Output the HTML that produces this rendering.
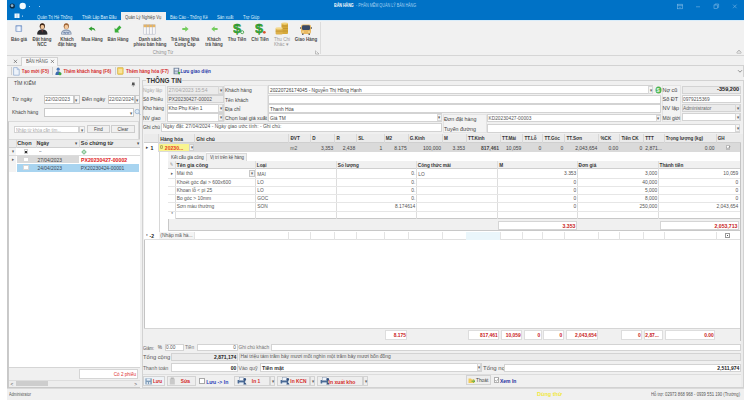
<!DOCTYPE html>
<html><head><meta charset="utf-8"><style>
html,body{margin:0;padding:0;}
body{width:750px;height:400px;position:relative;overflow:hidden;background:#fff;font-family:"Liberation Sans",sans-serif;}
body>div,body>svg{position:absolute;box-sizing:border-box;}
.t{white-space:nowrap;}
</style></head><body>
<div style="left:7px;top:0px;width:737px;height:400px;background:#F0F0F0"></div><div style="left:7px;top:0px;width:737px;height:20px;background:#0072C6"></div><div style="left:7px;top:19.6px;width:737px;height:0.9px;background:#D8ECFA"></div><svg style="left:9px;top:3px" width="8" height="7"><circle cx="3.3" cy="3" r="2.6" fill="#0A2A44"/><circle cx="3.1" cy="2.7" r="1.4" fill="#8FB3CC"/></svg><svg style="left:19px;top:2px" width="8" height="8"><circle cx="3.7" cy="4" r="3.2" fill="#F4FBFF"/></svg><div style="left:28.5px;top:5.5px;width:1.2px;height:1.2px;background:#9FD0F5"></div><div style="left:38.5px;top:5.5px;width:1.2px;height:1.2px;background:#9FD0F5"></div><div class="t" style="left:334px;top:4.39px;font-size:4.5px;transform:scaleX(0.812);transform-origin:0 0;line-height:4.5px;color:#FFFFFF;font-weight:bold;">BÁN HÀNG</div><div class="t" style="left:355.5px;top:4.39px;font-size:4.5px;transform:scaleX(0.827);transform-origin:0 0;line-height:4.5px;color:#A9D3F2;">- PHẦN MỀM QUẢN LÝ BÁN HÀNG</div><svg style="left:672px;top:1px" width="70" height="11" stroke="#86BDE8" stroke-width="0.55" fill="none"><rect x="5.3" y="3.2" width="5.4" height="4.6"/><line x1="5.3" y1="4.4" x2="10.7" y2="4.4"/><path d="M7,5.6 L8,6.6 L9,5.6" /><line x1="24" y1="5.8" x2="28" y2="5.8"/><rect x="42" y="4" width="3.6" height="3.4"/><polyline points="43,4 43,3 46.6,3 46.6,6.4 45.6,6.4"/><line x1="61" y1="3.6" x2="64.6" y2="7.2"/><line x1="64.6" y1="3.6" x2="61" y2="7.2"/></svg><svg style="left:14px;top:13px" width="10" height="7"><rect x="0.5" y="0.5" width="5" height="4.5" fill="#F2F8FC"/><line x1="3" y1="0.5" x2="3" y2="5" stroke="#7FB3DA" stroke-width="0.6"/><rect x="8" y="2.6" width="1" height="1" fill="#CFE6F7"/></svg><div class="t" style="left:37px;top:14.6px;font-size:4.5px;transform:scaleX(0.922);transform-origin:0 0;line-height:5.4px;color:#DDEEFB;">Quản Trị Hệ Thống</div><div class="t" style="left:82px;top:14.6px;font-size:4.5px;transform:scaleX(0.922);transform-origin:0 0;line-height:5.4px;color:#DDEEFB;">Thiết Lập Ban Đầu</div><div style="left:120.5px;top:12px;width:45.8px;height:8.5px;background:#F0F0F0"></div><div class="t" style="left:125px;top:14.8px;font-size:4.5px;transform:scaleX(0.922);transform-origin:0 0;line-height:5.4px;color:#444;">Quản Lý Nghiệp Vụ</div><div class="t" style="left:170px;top:14.6px;font-size:4.5px;transform:scaleX(0.922);transform-origin:0 0;line-height:5.4px;color:#DDEEFB;">Báo Cáo - Thống Kê</div><div class="t" style="left:216.5px;top:14.6px;font-size:4.5px;transform:scaleX(0.922);transform-origin:0 0;line-height:5.4px;color:#DDEEFB;">Sản xuất</div><div class="t" style="left:243px;top:14.6px;font-size:4.5px;transform:scaleX(0.922);transform-origin:0 0;line-height:5.4px;color:#DDEEFB;">Trợ Giúp</div><div style="left:7px;top:20.5px;width:737px;height:34.5px;background:#F1F1F1"></div><div style="left:7px;top:55px;width:737px;height:0.8px;background:#D6D6D6"></div><div style="left:319.5px;top:22px;width:0.7px;height:32px;background:#DCDCDC"></div><svg style="left:15px;top:25px" width="8" height="7"><rect x="0.5" y="0.3" width="6.6" height="6.4" rx="0.6" fill="#7A98C8"/><rect x="1.2" y="1.5" width="5.2" height="4.6" fill="#C9D8EE"/><rect x="2.4" y="1.5" width="2.8" height="4.6" fill="#F2F6FC"/></svg><svg style="left:36px;top:22px" width="13" height="13"><path d="M1.2,12.4 C1,9.2 3,7.6 6.3,7.6 C9.6,7.6 11.6,9.2 11.4,12.4 Q6.3,13 1.2,12.4 Z" fill="#2A2A2E"/><path d="M5.3,7.8 L6.3,11 L7.3,7.8 Z" fill="#6A3A3A"/><ellipse cx="6.3" cy="4.2" rx="2.6" ry="3" fill="#3E2718"/><ellipse cx="6.4" cy="4.9" rx="1.9" ry="2.2" fill="#F0C49A"/><path d="M4,3.6 C4.4,2.2 5.2,1.8 6.4,1.8 C7.6,1.8 8.4,2.4 8.7,3.6 C7.8,2.9 6.6,2.8 5.6,3 Z" fill="#3E2718"/></svg><svg style="left:60px;top:22px" width="13" height="13"><path d="M1,12.4 C0.8,9.2 3,7.6 6.3,7.6 C9.6,7.6 11.8,9.2 11.6,12.4 Q6.3,13 1,12.4 Z" fill="#8C9CB4"/><path d="M2.2,12 C2,10 3.5,8.8 6.3,8.8 C9.1,8.8 10.6,10 10.4,12 Z" fill="#D5DEEA"/><path d="M3.4,9.8 L4.1,11.6 L4.8,9.8 L5.5,11.6 L6.2,9.8 M6.6,9.8 L7.3,11.6 L8,9.8 L8.7,11.6 L9.4,9.8" stroke="#3F5A8A" stroke-width="0.5" fill="none"/><ellipse cx="6.3" cy="4.2" rx="2.6" ry="3" fill="#A0673A"/><ellipse cx="6.4" cy="4.9" rx="1.9" ry="2.2" fill="#F3C99E"/><path d="M4,3.6 C4.4,2.2 5.2,1.8 6.4,1.8 C7.6,1.8 8.4,2.4 8.7,3.6 C7.8,2.9 6.6,2.8 5.6,3 Z" fill="#A0673A"/></svg><svg style="left:88px;top:26px" width="8" height="6"><path d="M7.4,5.2 C7.2,2.6 5.6,1.6 3.8,1.8 L3.8,0.4 L0.6,2.8 L3.8,5 L3.8,3.6 C5.2,3.4 6.4,4 7.4,5.2 Z" fill="#2F9E2F"/></svg><svg style="left:113.5px;top:24.5px" width="8" height="8"><path d="M0.6,0.8 L5.2,0.6 L3.8,2 L7.4,5.4 L5.4,7.4 L1.9,4 L0.6,5.4 Z" fill="#3BAF3B" transform="rotate(270 4 4)"/></svg><svg style="left:143px;top:23.5px" width="13" height="11"><rect x="0.4" y="0.4" width="12" height="10" rx="0.8" fill="#F7F7F7" stroke="#B9BFCC" stroke-width="0.6"/><rect x="0.6" y="0.6" width="11.6" height="2.6" fill="#E8B460"/><line x1="3.4" y1="0.6" x2="3.4" y2="10.2" stroke="#A9AFBD" stroke-width="0.6"/><line x1="6.4" y1="0.6" x2="6.4" y2="10.2" stroke="#A9AFBD" stroke-width="0.6"/><line x1="9.4" y1="0.6" x2="9.4" y2="10.2" stroke="#A9AFBD" stroke-width="0.6"/></svg><svg style="left:182px;top:25.5px" width="7" height="6"><path d="M0.3,2 L3.3,2 L3.3,0.3 L6.6,3 L3.3,5.7 L3.3,4 L0.3,4 Z" fill="#74CC5E"/></svg><svg style="left:210.5px;top:25.5px" width="7" height="6"><path d="M6.6,2 L3.6,2 L3.6,0.3 L0.3,3 L3.6,5.7 L3.6,4 L6.6,4 Z" fill="#74CC5E"/></svg><svg style="left:233px;top:22px" width="12" height="13"><text x="0" y="10.8" font-family="Liberation Sans" font-weight="bold" font-size="13.5" fill="#36B036" stroke="#1C7A1C" stroke-width="0.35" transform="scale(1.08,1)">$</text><circle cx="9.2" cy="10.2" r="1.5" fill="none" stroke="#3A9E3A" stroke-width="0.8"/></svg><svg style="left:255px;top:22px" width="12" height="13"><text x="0" y="10.8" font-family="Liberation Sans" font-weight="bold" font-size="13.5" fill="#36B036" stroke="#1C7A1C" stroke-width="0.35" transform="scale(1.08,1)">$</text><circle cx="9.3" cy="10.3" r="1.4" fill="#D9542B"/></svg><svg style="left:275px;top:22px" width="14" height="13"><rect x="6.5" y="1" width="6.5" height="11" rx="1" fill="#D6A93A"/><ellipse cx="9.75" cy="1.6" rx="3.25" ry="1.1" fill="#F2D27A"/><line x1="6.5" y1="4" x2="13" y2="4" stroke="#A87B1C" stroke-width="0.4"/><line x1="6.5" y1="6.5" x2="13" y2="6.5" stroke="#A87B1C" stroke-width="0.4"/><line x1="6.5" y1="9" x2="13" y2="9" stroke="#A87B1C" stroke-width="0.4"/><rect x="0.6" y="6" width="7" height="6.4" rx="1" fill="#DDB04A"/><ellipse cx="4.1" cy="6.4" rx="3.5" ry="1.1" fill="#F4D88A"/><line x1="0.6" y1="9.2" x2="7.6" y2="9.2" stroke="#A87B1C" stroke-width="0.4"/></svg><svg style="left:299.5px;top:23.5px" width="12" height="11"><rect x="1" y="0.5" width="10" height="9.5" rx="2" fill="#E9B962"/><rect x="2" y="1.3" width="8" height="4.6" rx="1.2" fill="#3A4A66"/><rect x="0.2" y="3" width="1" height="2" fill="#666"/><rect x="10.8" y="3" width="1" height="2" fill="#666"/><circle cx="3" cy="8" r="0.7" fill="#FFF3C0"/><circle cx="9" cy="8" r="0.7" fill="#FFF3C0"/><rect x="2" y="9.6" width="1.5" height="1.2" fill="#444"/><rect x="8.5" y="9.6" width="1.5" height="1.2" fill="#444"/></svg><div class="t" style="left:-1.1px;top:37.41px;width:40px;text-align:center;font-size:4.5px;transform:scaleX(0.989);transform-origin:50% 0;line-height:5.79px;color:#4A4A4A;font-weight:bold;">Báo giá</div><div class="t" style="left:22.3px;top:37.41px;width:40px;text-align:center;font-size:4.5px;transform:scaleX(0.989);transform-origin:50% 0;line-height:5.79px;color:#4A4A4A;font-weight:bold;">Đặt hàng</div><div class="t" style="left:22.3px;top:42.01px;width:40px;text-align:center;font-size:4.5px;transform:scaleX(0.989);transform-origin:50% 0;line-height:5.79px;color:#4A4A4A;font-weight:bold;">NCC</div><div class="t" style="left:46.5px;top:37.41px;width:40px;text-align:center;font-size:4.5px;transform:scaleX(0.989);transform-origin:50% 0;line-height:5.79px;color:#4A4A4A;font-weight:bold;">Khách</div><div class="t" style="left:46.5px;top:42.01px;width:40px;text-align:center;font-size:4.5px;transform:scaleX(0.989);transform-origin:50% 0;line-height:5.79px;color:#4A4A4A;font-weight:bold;">đặt hàng</div><div class="t" style="left:71.8px;top:37.41px;width:40px;text-align:center;font-size:4.5px;transform:scaleX(0.989);transform-origin:50% 0;line-height:5.79px;color:#4A4A4A;font-weight:bold;">Mua Hàng</div><div class="t" style="left:97.6px;top:37.41px;width:40px;text-align:center;font-size:4.5px;transform:scaleX(0.989);transform-origin:50% 0;line-height:5.79px;color:#4A4A4A;font-weight:bold;">Bán Hàng</div><div class="t" style="left:124.5px;top:37.41px;width:50px;text-align:center;font-size:4.5px;transform:scaleX(0.989);transform-origin:50% 0;line-height:5.79px;color:#4A4A4A;font-weight:bold;">Danh sách</div><div class="t" style="left:124.5px;top:42.01px;width:50px;text-align:center;font-size:4.5px;transform:scaleX(0.989);transform-origin:50% 0;line-height:5.79px;color:#4A4A4A;font-weight:bold;">phiếu bán hàng</div><div class="t" style="left:160.3px;top:37.41px;width:50px;text-align:center;font-size:4.5px;transform:scaleX(0.989);transform-origin:50% 0;line-height:5.79px;color:#4A4A4A;font-weight:bold;">Trả Hàng Nhà</div><div class="t" style="left:160.3px;top:42.01px;width:50px;text-align:center;font-size:4.5px;transform:scaleX(0.989);transform-origin:50% 0;line-height:5.79px;color:#4A4A4A;font-weight:bold;">Cung Cấp</div><div class="t" style="left:194.0px;top:37.41px;width:40px;text-align:center;font-size:4.5px;transform:scaleX(0.989);transform-origin:50% 0;line-height:5.79px;color:#4A4A4A;font-weight:bold;">Khách</div><div class="t" style="left:194.0px;top:42.01px;width:40px;text-align:center;font-size:4.5px;transform:scaleX(0.989);transform-origin:50% 0;line-height:5.79px;color:#4A4A4A;font-weight:bold;">trả hàng</div><div class="t" style="left:217.3px;top:37.41px;width:40px;text-align:center;font-size:4.5px;transform:scaleX(0.989);transform-origin:50% 0;line-height:5.79px;color:#4A4A4A;font-weight:bold;">Thu Tiền</div><div class="t" style="left:239.8px;top:37.41px;width:40px;text-align:center;font-size:4.5px;transform:scaleX(0.989);transform-origin:50% 0;line-height:5.79px;color:#4A4A4A;font-weight:bold;">Chi Tiền</div><div class="t" style="left:274px;top:37.31px;font-size:4.6px;line-height:5.98px;color:#9A9A9A;">Thu Chi</div><div class="t" style="left:274px;top:41.91px;font-size:4.6px;line-height:5.98px;color:#9A9A9A;">Khác ▾</div><div class="t" style="left:286.0px;top:37.41px;width:40px;text-align:center;font-size:4.5px;transform:scaleX(0.989);transform-origin:50% 0;line-height:5.79px;color:#4A4A4A;font-weight:bold;">Giao Hàng</div><div class="t" style="left:142.5px;top:50.14px;width:40px;text-align:center;font-size:4.5px;transform:scaleX(0.978);transform-origin:50% 0;line-height:5.72px;color:#8A8A8A;">Chứng Từ</div><svg style="left:315px;top:49.5px" width="5" height="5" stroke="#8A8A8A" stroke-width="0.5" fill="none"><polyline points="0.5,0.5 0.5,4 4,4"/><line x1="1.5" y1="1.5" x2="4" y2="4"/></svg><svg style="left:736px;top:49px" width="6" height="5"><path d="M0.8,3.6 L3,1.2 L5.2,3.6" stroke="#8A8A8A" stroke-width="0.7" fill="none"/><line x1="0.8" y1="4.2" x2="5.2" y2="4.2" stroke="#8A8A8A" stroke-width="0.5"/></svg><div style="left:7px;top:65px;width:737px;height:0.6px;background:#D2D2D2"></div><div style="left:21.4px;top:57.4px;width:36.4px;height:8.2px;background:#F7F7F7;border:0.6px solid #D2D2D2;border-bottom:none"></div><svg style="left:12.5px;top:59px" width="5" height="5" stroke="#555" stroke-width="0.6"><line x1="0.8" y1="0.8" x2="4" y2="4"/><line x1="4" y1="0.8" x2="0.8" y2="4"/></svg><div class="t" style="left:26px;top:58.67px;font-size:4.5px;transform:scaleX(0.933);transform-origin:0 0;line-height:5.46px;color:#555;">BÁN HÀNG</div><svg style="left:50px;top:59px" width="5" height="5" stroke="#555" stroke-width="0.6"><line x1="0.8" y1="0.8" x2="4" y2="4"/><line x1="4" y1="0.8" x2="0.8" y2="4"/></svg><div style="left:11px;top:67px;width:0.6px;height:8px;background:#CFCFCF"></div><div style="left:52px;top:67px;width:0.6px;height:8px;background:#CFCFCF"></div><div style="left:114.5px;top:67px;width:0.6px;height:8px;background:#CFCFCF"></div><svg style="left:13px;top:66.5px" width="7" height="9"><path d="M0.6,0.6 L4.2,0.6 L6.2,2.6 L6.2,8.2 L0.6,8.2 Z" fill="#EEF3FA" stroke="#7D9CC9" stroke-width="0.6"/><path d="M4.2,0.6 L4.2,2.6 L6.2,2.6" fill="none" stroke="#7D9CC9" stroke-width="0.5"/></svg><div class="t" style="left:21.8px;top:69.28px;font-size:4.5px;line-height:5.85px;color:#D42B2B;font-weight:bold;">Tạo mới (F5)</div><svg style="left:55px;top:66.5px" width="7" height="9"><circle cx="3.2" cy="2.2" r="1.6" fill="#4A78B8"/><path d="M0.4,8 C0.4,5.4 1.6,4.2 3.2,4.2 C4.8,4.2 6,5.4 6,8 Z" fill="#3C6AAE"/><circle cx="5" cy="6.8" r="1.5" fill="#3EAA3E"/></svg><div class="t" style="left:63.4px;top:69.28px;font-size:4.5px;line-height:5.85px;color:#D42B2B;font-weight:bold;">Thêm khách hàng (F6)</div><svg style="left:117px;top:67px" width="7" height="8"><rect x="0.4" y="0.4" width="5.8" height="7" rx="0.8" fill="#F1CF5A" stroke="#C9A23A" stroke-width="0.5"/><rect x="1.4" y="2" width="3.8" height="4.2" fill="#F8E39A"/></svg><div class="t" style="left:126px;top:69.28px;font-size:4.5px;line-height:5.85px;color:#D42B2B;font-weight:bold;">Thêm hàng hóa (F7)</div><svg style="left:172.5px;top:66.5px" width="8" height="9"><rect x="0.6" y="0.8" width="5.6" height="6.4" fill="#6A7C96"/><rect x="1.6" y="1.6" width="3.6" height="2" fill="#E8EEF6"/><rect x="1.6" y="4.4" width="3.6" height="2.2" fill="#C8D2E0"/><path d="M4.6,5 L7.6,5 L6.1,8 Z" fill="#3FAA3F"/></svg><div class="t" style="left:180.4px;top:69.21px;font-size:4.6px;line-height:5.98px;color:#2536A8;font-weight:bold;">Lưu giao diện</div><svg style="left:737px;top:69px" width="6" height="5"><path d="M1,1.2 L3,3.2 L5,1.2" stroke="#666" stroke-width="0.7" fill="none"/></svg><div style="left:743px;top:65px;width:1px;height:12px;background:#D0D0D0"></div><div style="left:7px;top:77px;width:133.3px;height:311px;background:#F0F0F0;border:0.8px solid #C8C8C8"></div><div class="t" style="left:14px;top:81.41px;font-size:4.9px;line-height:6.37px;color:#444;">TÌM KIẾM</div><svg style="left:131px;top:82px" width="5" height="5"><path d="M1,0.5 L3.6,0.5 L3.6,2.6 L4.3,3.2 L0.3,3.2 L1,2.6 Z" fill="#555"/><line x1="2.3" y1="3.2" x2="2.3" y2="4.8" stroke="#555" stroke-width="0.5"/></svg><div class="t" style="left:12px;top:96.29px;font-size:5.4px;line-height:7.02px;color:#444;">Từ ngày</div><div style="left:43.5px;top:95px;width:30.0px;height:9px;background:#fff;border:0.6px solid #C9C9C9"></div><div class="t" style="left:45.3px;top:97.08px;font-size:4.95px;line-height:6.44px;color:#555;">22/02/2023</div><div style="left:73.5px;top:95px;width:6.0px;height:9px;background:#F4F4F4;border:0.6px solid #C9C9C9"></div><div class="t" style="left:73.4px;top:98.0px;width:6px;text-align:center;font-size:4.5px;transform:scaleX(0.889);transform-origin:50% 0;line-height:5.2px;color:#555;">▾</div><div class="t" style="left:82px;top:96.29px;font-size:5.4px;line-height:7.02px;color:#444;">Đến ngày</div><div style="left:107.5px;top:95px;width:27.5px;height:9px;background:#fff;border:0.6px solid #C9C9C9"></div><div class="t" style="left:109px;top:97.08px;font-size:4.95px;line-height:6.44px;color:#555;">22/02/2024</div><div style="left:135px;top:95px;width:5px;height:9px;background:#F4F4F4;border:0.6px solid #C9C9C9"></div><div class="t" style="left:134.0px;top:98.0px;width:6px;text-align:center;font-size:4.5px;transform:scaleX(0.889);transform-origin:50% 0;line-height:5.2px;color:#555;">▾</div><div class="t" style="left:12px;top:109.81px;font-size:4.9px;line-height:6.37px;color:#444;">Khách hàng</div><div style="left:43.5px;top:108px;width:90.0px;height:8.5px;background:#fff;border:0.6px solid #C9C9C9"></div><div class="t" style="left:127.5px;top:110.7px;width:6px;text-align:center;font-size:4.5px;transform:scaleX(0.889);transform-origin:50% 0;line-height:5.2px;color:#555;">▾</div><svg style="left:133.5px;top:108px" width="7" height="8"><circle cx="3.2" cy="3.5" r="2.2" fill="#DDEBF7" stroke="#7F9FC4" stroke-width="0.6"/><line x1="4.8" y1="5.1" x2="6.4" y2="6.8" stroke="#7F9FC4" stroke-width="0.7"/></svg><div style="left:8.3px;top:120.5px;width:131.2px;height:266.5px;background:#F3F3F3;border-top:0.6px solid #DADADA;border-left:0.8px solid #CACACA;border-right:0.6px solid #DADADA"></div><div style="left:14.3px;top:125.8px;width:64.9px;height:7.7px;background:#fff;border:0.6px solid #D3D3D3"></div><div class="t" style="left:16px;top:127.7px;font-size:4.5px;transform:scaleX(0.956);transform-origin:0 0;line-height:5.59px;color:#A8A8A8;">Nhập từ khóa cần tìm...</div><div style="left:79.4px;top:125.8px;width:5.2px;height:7.7px;background:#F5F5F5;border:0.6px solid #D3D3D3"></div><div class="t" style="left:79.0px;top:128.0px;width:6px;text-align:center;font-size:4.5px;transform:scaleX(0.889);transform-origin:50% 0;line-height:5.2px;color:#555;">▾</div><div style="left:87px;top:125.2px;width:22.7px;height:8.1px;background:#F0F0F0;border:0.6px solid #CDCDCD"></div><div class="t" style="left:83.4px;top:127.38px;width:30px;text-align:center;font-size:4.5px;line-height:5.85px;color:#444;">Find</div><div style="left:111.3px;top:125.2px;width:23.3px;height:8.1px;background:#F0F0F0;border:0.6px solid #CDCDCD"></div><div class="t" style="left:107.9px;top:127.38px;width:30px;text-align:center;font-size:4.5px;line-height:5.85px;color:#444;">Clear</div><div style="left:9px;top:138.5px;width:130.5px;height:9.0px;background:#EBEBEB;border-bottom:0.6px solid #CFCFCF;border-top:0.6px solid #DADADA"></div><div style="left:16px;top:138.5px;width:0.6px;height:33.5px;background:#D9D9D9"></div><div style="left:35.5px;top:138.5px;width:0.6px;height:9.0px;background:#D9D9D9"></div><div style="left:79.3px;top:138.5px;width:0.6px;height:9.0px;background:#D9D9D9"></div><div class="t" style="left:17.3px;top:139.96px;font-size:5.6px;line-height:7.28px;color:#333;font-weight:bold;">Chọn</div><div class="t" style="left:36.8px;top:140.35px;font-size:5.0px;line-height:6.5px;color:#333;font-weight:bold;">Ngày</div><div class="t" style="left:72.5px;top:141.4px;width:6px;text-align:center;font-size:4.5px;transform:scaleX(0.889);transform-origin:50% 0;line-height:5.2px;color:#444;">▾</div><div class="t" style="left:80.8px;top:140.09px;font-size:5.4px;line-height:7.02px;color:#333;font-weight:bold;">Số chứng từ</div><div class="t" style="left:134.6px;top:141.4px;width:6px;text-align:center;font-size:4.5px;transform:scaleX(0.889);transform-origin:50% 0;line-height:5.2px;color:#444;">▾</div><div style="left:9px;top:147.5px;width:130.5px;height:219.5px;background:#fff"></div><div style="left:9px;top:147.5px;width:7px;height:24.5px;background:#F3F3F3"></div><div style="left:9px;top:155.3px;width:130.5px;height:0.6px;background:#DCDCDC"></div><div class="t" style="left:9.5px;top:150.16px;width:6px;text-align:center;font-size:4.5px;transform:scaleX(0.8);transform-origin:50% 0;line-height:4.68px;color:#555;">▾</div><div style="left:23.6px;top:149.2px;width:4.8px;height:4.8px;background:#fff;border:0.5px solid #D0D0D0"></div><div style="left:24.9px;top:150.5px;width:2.2px;height:2.2px;background:#333"></div><div class="t" style="left:38.5px;top:148.74px;font-size:4.5px;transform:scaleX(0.978);transform-origin:0 0;line-height:5.72px;color:#444;">–</div><svg style="left:80.5px;top:148.5px" width="6" height="6"><path d="M2.3,1 L3.7,1 L3.7,2.3 L5,2.3 L5,3.7 L3.7,3.7 L3.7,5 L2.3,5 L2.3,3.7 L1,3.7 L1,2.3 L2.3,2.3 Z" fill="#E6F4EA" stroke="#48A860" stroke-width="0.6"/></svg><div style="left:16.6px;top:155.9px;width:62.7px;height:7.6px;background:#D9D9D9"></div><div class="t" style="left:9.5px;top:158.36px;width:6px;text-align:center;font-size:4.5px;transform:scaleX(0.8);transform-origin:50% 0;line-height:4.68px;color:#555;">▸</div><div style="left:23.4px;top:157.3px;width:5.2px;height:5.0px;background:#fff;border:0.5px solid #D8D8D8"></div><div class="t" style="left:37.5px;top:157.51px;font-size:4.9px;line-height:6.37px;color:#444;">27/04/2023</div><div class="t" style="left:81px;top:157.22px;font-size:5.2px;line-height:6.76px;color:#E02020;font-weight:bold;">PX20230427-00002</div><div style="left:16.6px;top:163.5px;width:122.9px;height:8.0px;background:#A8D4F0"></div><div style="left:23.4px;top:165.3px;width:5.2px;height:5.0px;background:#fff;border:0.5px solid #D8D8D8"></div><div class="t" style="left:37.5px;top:165.51px;font-size:4.9px;line-height:6.37px;color:#3A4A5A;">24/04/2023</div><div class="t" style="left:80.8px;top:165.51px;font-size:4.9px;line-height:6.37px;color:#3A4A5A;">PX20230424-00001</div><div style="left:9px;top:367px;width:130.5px;height:13px;background:#F0F0F0;border-top:0.6px solid #D5D5D5"></div><div style="left:79.3px;top:369px;width:58.5px;height:9.7px;background:#fff;border:0.6px solid #D5D5D5"></div><div class="t" style="left:76px;top:371.81px;width:60px;text-align:right;font-size:4.6px;line-height:5.98px;color:#E03030;">Có 2 phiếu</div><div style="left:9px;top:380.3px;width:130.5px;height:6.7px;background:#EDEDED;border-top:0.6px solid #DDD"></div><div style="left:15.8px;top:381px;width:32.7px;height:5.3px;background:#CDCDCD"></div><div class="t" style="left:8.8px;top:381.68px;width:6px;text-align:center;font-size:4.8px;line-height:6.24px;color:#555;"><</div><div class="t" style="left:132.6px;top:381.68px;width:6px;text-align:center;font-size:4.8px;line-height:6.24px;color:#555;">></div><div style="left:7px;top:388px;width:737px;height:12px;background:#F0F0F0;border-top:0.6px solid #DADADA"></div><div class="t" style="left:9px;top:392.79px;font-size:4.5px;transform:scaleX(0.83);transform-origin:0 0;line-height:4.5px;color:#555;">Administrator</div><div class="t" style="left:537px;top:391.6px;font-size:5.56px;line-height:5.56px;color:#F0E83C;font-weight:bold;">Dùng thử</div><div class="t" style="left:651px;top:392.79px;font-size:4.5px;transform:scaleX(0.927);transform-origin:0 0;line-height:4.5px;color:#555;">Hỗ trợ: 02973 868 968 - 0939 551 190 (Trường)</div><div style="left:140.8px;top:77px;width:603.2px;height:311px;background:#F0F0F0"></div><div style="left:142.1px;top:80.2px;width:601.9px;height:307.8px;border:0.8px solid #D2D2D2"></div><div style="left:145.5px;top:79.5px;width:36.5px;height:2.0px;background:#F0F0F0"></div><div class="t" style="left:146.5px;top:76.87px;font-size:6.35px;line-height:8.25px;color:#333;font-weight:bold;letter-spacing:0.02px">THÔNG TIN</div><div style="left:142.6px;top:84.6px;width:23.7px;height:37.6px;background:#F3F3F3;border:0.6px solid #E3E3E3"></div><div style="left:224px;top:84.6px;width:44.3px;height:37.6px;background:#F3F3F3;border:0.6px solid #E3E3E3"></div><div style="left:442.5px;top:113.6px;width:44.1px;height:19.2px;background:#F3F3F3;border:0.6px solid #E3E3E3"></div><div style="left:661.6px;top:84.6px;width:19.7px;height:37.6px;background:#F3F3F3;border:0.6px solid #E3E3E3"></div><div class="t" style="left:143px;top:87.81px;font-size:4.9px;line-height:6.37px;color:#A8A8A8;">Ngày lập</div><div style="left:166.5px;top:85.5px;width:57.0px;height:9.0px;background:#EBEBEB;border:0.6px solid #D3D3D3"></div><div style="left:218.3px;top:85.9px;width:4.8px;height:8.2px;background:#EAEAEA;border:0.6px solid #D8D8D8"></div><div class="t" style="left:217.7px;top:88.73px;width:6px;text-align:center;font-size:4.5px;transform:scaleX(0.844);transform-origin:50% 0;line-height:4.94px;color:#555;">▾</div><div class="t" style="left:168.5px;top:87.35px;font-size:5.0px;line-height:6.5px;color:#A8A8A8;">27/04/2023 15:54</div><div class="t" style="left:143px;top:97.31px;font-size:4.9px;line-height:6.37px;color:#444;">Số Phiếu</div><div style="left:166.5px;top:94.7px;width:57.0px;height:8.8px;background:#EBEBEB;border:0.6px solid #D3D3D3"></div><div class="t" style="left:168.5px;top:96.61px;font-size:4.9px;line-height:6.37px;color:#555;">PX20230427-00002</div><div class="t" style="left:143px;top:106.31px;font-size:4.9px;line-height:6.37px;color:#444;">Kho hàng</div><div style="left:166.5px;top:104px;width:57.0px;height:8.5px;background:#fff;border:0.6px solid #D3D3D3"></div><div style="left:218.3px;top:104.4px;width:4.8px;height:7.7px;background:#F5F5F5;border:0.6px solid #D8D8D8"></div><div class="t" style="left:217.7px;top:106.98px;width:6px;text-align:center;font-size:4.5px;transform:scaleX(0.844);transform-origin:50% 0;line-height:4.94px;color:#555;">▾</div><div class="t" style="left:168.5px;top:105.61px;font-size:4.9px;line-height:6.37px;color:#444;">Kho Phụ Kiện 1</div><div class="t" style="left:143px;top:115.61px;font-size:4.9px;line-height:6.37px;color:#444;">NV giao</div><div style="left:166.5px;top:113.3px;width:57.0px;height:8.5px;background:#fff;border:0.6px solid #D3D3D3"></div><div style="left:218.3px;top:113.7px;width:4.8px;height:7.7px;background:#F5F5F5;border:0.6px solid #D8D8D8"></div><div class="t" style="left:217.7px;top:116.28px;width:6px;text-align:center;font-size:4.5px;transform:scaleX(0.844);transform-origin:50% 0;line-height:4.94px;color:#555;">▾</div><div class="t" style="left:143px;top:125.01px;font-size:4.9px;line-height:6.37px;color:#444;">Ghi chú</div><div style="left:161px;top:122.6px;width:281px;height:9.0px;background:#fff;border:0.6px solid #D3D3D3"></div><div class="t" style="left:163px;top:125.0px;font-size:4.96px;line-height:4.96px;color:#555;">Ngày đặt: 27/04/2024 - Ngày giao ước tính:  - Ghi chú:</div><div class="t" style="left:225px;top:87.15px;font-size:5.0px;line-height:6.5px;color:#444;">Khách hàng</div><div class="t" style="left:225px;top:96.75px;font-size:5.0px;line-height:6.5px;color:#444;">Tên khách</div><div class="t" style="left:225px;top:105.95px;font-size:5.0px;line-height:6.5px;color:#444;">Địa chỉ</div><div class="t" style="left:225px;top:115.19px;font-size:5.25px;line-height:6.83px;color:#444;">Chọn loại giá xuất</div><div style="left:267.9px;top:85.3px;width:385.6px;height:9.0px;background:#fff;border:0.6px solid #D3D3D3"></div><div style="left:648.3px;top:85.7px;width:4.8px;height:8.2px;background:#F5F5F5;border:0.6px solid #D8D8D8"></div><div class="t" style="left:647.7px;top:88.53px;width:6px;text-align:center;font-size:4.5px;transform:scaleX(0.844);transform-origin:50% 0;line-height:4.94px;color:#555;">▾</div><div class="t" style="left:270px;top:87.88px;font-size:4.8px;line-height:6.24px;color:#444;">20220726174045 - Nguyễn Thị Hồng Hạnh</div><svg style="left:654.5px;top:86px" width="7" height="8"><ellipse cx="3.5" cy="4" rx="3" ry="3.5" fill="#4DB34D"/><text x="1.5" y="6.4" font-family="Liberation Sans" font-weight="bold" font-size="5.6" fill="#E8F8E8">$</text></svg><div style="left:267.9px;top:95px;width:393.3px;height:8.5px;background:#fff;border:0.6px solid #D3D3D3"></div><div style="left:267.9px;top:104px;width:393.3px;height:8.5px;background:#fff;border:0.6px solid #D3D3D3"></div><div class="t" style="left:270px;top:106.68px;font-size:4.8px;line-height:6.24px;color:#444;">Thanh Hóa</div><div style="left:267.9px;top:113.3px;width:174.1px;height:8.5px;background:#fff;border:0.6px solid #D3D3D3"></div><div style="left:436.8px;top:113.7px;width:4.8px;height:7.7px;background:#F5F5F5;border:0.6px solid #D8D8D8"></div><div class="t" style="left:436.2px;top:116.28px;width:6px;text-align:center;font-size:4.5px;transform:scaleX(0.844);transform-origin:50% 0;line-height:4.94px;color:#555;">▾</div><div class="t" style="left:270px;top:115.68px;font-size:4.8px;line-height:6.24px;color:#444;">Giá TM</div><div class="t" style="left:444px;top:115.96px;font-size:5.3px;line-height:6.89px;color:#444;">Đơn đặt hàng</div><div class="t" style="left:444px;top:125.75px;font-size:5.3px;line-height:6.89px;color:#444;">Tuyến đường</div><div style="left:486.8px;top:114.4px;width:174.4px;height:8.0px;background:#fff;border:0.6px solid #D3D3D3"></div><div style="left:656.0px;top:114.80000000000001px;width:4.8px;height:7.2px;background:#F5F5F5;border:0.6px solid #D8D8D8"></div><div class="t" style="left:655.4px;top:117.13px;width:6px;text-align:center;font-size:4.5px;transform:scaleX(0.844);transform-origin:50% 0;line-height:4.94px;color:#555;">▾</div><div class="t" style="left:488.5px;top:116.28px;font-size:4.8px;line-height:6.24px;color:#555;">KD20230427-00003</div><div style="left:486.8px;top:123.5px;width:253.7px;height:9.0px;background:#fff;border:0.6px solid #D3D3D3"></div><div style="left:735.3px;top:123.9px;width:4.8px;height:8.2px;background:#F5F5F5;border:0.6px solid #D8D8D8"></div><div class="t" style="left:734.7px;top:126.73px;width:6px;text-align:center;font-size:4.5px;transform:scaleX(0.844);transform-origin:50% 0;line-height:4.94px;color:#555;">▾</div><div class="t" style="left:662.5px;top:86.92px;font-size:5.5px;line-height:7.15px;color:#444;">Nợ cũ</div><div class="t" style="left:662.5px;top:96.12px;font-size:5.5px;line-height:7.15px;color:#444;">Số ĐT</div><div class="t" style="left:662.5px;top:105.22px;font-size:5.5px;line-height:7.15px;color:#444;">NV lập</div><div class="t" style="left:662.5px;top:114.75px;font-size:5.0px;line-height:6.5px;color:#444;">Môi giới</div><div style="left:681.5px;top:85.5px;width:59.0px;height:8.3px;background:#EBEBEB;border:0.6px solid #D3D3D3"></div><div class="t" style="left:679.2px;top:86.36px;width:60px;text-align:right;font-size:5.6px;line-height:7.28px;color:#222;font-weight:bold;">-359,200</div><div style="left:681.5px;top:95px;width:59.0px;height:8.2px;background:#fff;border:0.6px solid #D3D3D3"></div><div class="t" style="left:683px;top:97.08px;font-size:4.8px;line-height:6.24px;color:#555;">0979215369</div><div style="left:681.5px;top:104px;width:59.0px;height:8.2px;background:#EBEBEB;border:0.6px solid #D3D3D3"></div><div style="left:735.3px;top:104.4px;width:4.8px;height:7.4px;background:#EAEAEA;border:0.6px solid #D8D8D8"></div><div class="t" style="left:734.7px;top:106.83px;width:6px;text-align:center;font-size:4.5px;transform:scaleX(0.844);transform-origin:50% 0;line-height:4.94px;color:#555;">▾</div><div class="t" style="left:683px;top:106.08px;font-size:4.8px;line-height:6.24px;color:#666;">Administrator</div><div style="left:681.5px;top:113px;width:59.0px;height:8.4px;background:#fff;border:0.6px solid #D3D3D3"></div><div style="left:735.3px;top:113.4px;width:4.8px;height:7.6px;background:#F5F5F5;border:0.6px solid #D8D8D8"></div><div class="t" style="left:734.7px;top:115.93px;width:6px;text-align:center;font-size:4.5px;transform:scaleX(0.844);transform-origin:50% 0;line-height:4.94px;color:#555;">▾</div><div style="left:143.5px;top:133.5px;width:597.0px;height:207.8px;background:#fff;border:0.8px solid #C4C4C4"></div><div style="left:143.5px;top:133.8px;width:597.0px;height:9.5px;background:#EBEBEB;border-bottom:0.6px solid #CFCFCF"></div><div style="left:158.0px;top:133.8px;width:0.6px;height:17.8px;background:#D8D8D8"></div><div style="left:194.0px;top:133.8px;width:0.6px;height:17.8px;background:#D8D8D8"></div><div style="left:288.2px;top:133.8px;width:0.6px;height:17.8px;background:#D8D8D8"></div><div style="left:310.0px;top:133.8px;width:0.6px;height:17.8px;background:#D8D8D8"></div><div style="left:334.2px;top:133.8px;width:0.6px;height:17.8px;background:#D8D8D8"></div><div style="left:356.0px;top:133.8px;width:0.6px;height:17.8px;background:#D8D8D8"></div><div style="left:383.5px;top:133.8px;width:0.6px;height:17.8px;background:#D8D8D8"></div><div style="left:407.5px;top:133.8px;width:0.6px;height:17.8px;background:#D8D8D8"></div><div style="left:441.8px;top:133.8px;width:0.6px;height:17.8px;background:#D8D8D8"></div><div style="left:465.8px;top:133.8px;width:0.6px;height:17.8px;background:#D8D8D8"></div><div style="left:499.8px;top:133.8px;width:0.6px;height:17.8px;background:#D8D8D8"></div><div style="left:522.2px;top:133.8px;width:0.6px;height:17.8px;background:#D8D8D8"></div><div style="left:542.2px;top:133.8px;width:0.6px;height:17.8px;background:#D8D8D8"></div><div style="left:564.2px;top:133.8px;width:0.6px;height:17.8px;background:#D8D8D8"></div><div style="left:598.2px;top:133.8px;width:0.6px;height:17.8px;background:#D8D8D8"></div><div style="left:619.1px;top:133.8px;width:0.6px;height:17.8px;background:#D8D8D8"></div><div style="left:643.0px;top:133.8px;width:0.6px;height:17.8px;background:#D8D8D8"></div><div style="left:663.5px;top:133.8px;width:0.6px;height:17.8px;background:#D8D8D8"></div><div style="left:715.5px;top:133.8px;width:0.6px;height:17.8px;background:#D8D8D8"></div><div class="t" style="left:160.3px;top:136.15px;font-size:5.0px;line-height:6.5px;color:#333;font-weight:bold;">Hàng hóa</div><div class="t" style="left:196.3px;top:136.15px;font-size:5.0px;line-height:6.5px;color:#333;font-weight:bold;">Ghi chú</div><div class="t" style="left:290.5px;top:136.41px;font-size:4.6px;line-height:5.98px;color:#333;font-weight:bold;">ĐVT</div><div class="t" style="left:312.3px;top:136.41px;font-size:4.6px;line-height:5.98px;color:#333;font-weight:bold;">D</div><div class="t" style="left:336.5px;top:136.41px;font-size:4.6px;line-height:5.98px;color:#333;font-weight:bold;">R</div><div class="t" style="left:358.3px;top:136.41px;font-size:4.6px;line-height:5.98px;color:#333;font-weight:bold;">SL</div><div class="t" style="left:385.8px;top:136.41px;font-size:4.6px;line-height:5.98px;color:#333;font-weight:bold;">M2</div><div class="t" style="left:409.8px;top:136.41px;font-size:4.6px;line-height:5.98px;color:#333;font-weight:bold;">G.Kính</div><div class="t" style="left:444.1px;top:136.41px;font-size:4.6px;line-height:5.98px;color:#333;font-weight:bold;">M</div><div class="t" style="left:468.1px;top:136.41px;font-size:4.6px;line-height:5.98px;color:#333;font-weight:bold;">TT.Kính</div><div class="t" style="left:502.1px;top:136.41px;font-size:4.6px;line-height:5.98px;color:#333;font-weight:bold;">TT.Mài</div><div class="t" style="left:524.5px;top:136.41px;font-size:4.6px;line-height:5.98px;color:#333;font-weight:bold;">TT.Lỗ</div><div class="t" style="left:544.5px;top:136.41px;font-size:4.6px;line-height:5.98px;color:#333;font-weight:bold;">TT.Góc</div><div class="t" style="left:566.5px;top:136.41px;font-size:4.6px;line-height:5.98px;color:#333;font-weight:bold;">TT.Sơn</div><div class="t" style="left:600.5px;top:136.41px;font-size:4.6px;line-height:5.98px;color:#333;font-weight:bold;">%CK</div><div class="t" style="left:621.4px;top:136.41px;font-size:4.6px;line-height:5.98px;color:#333;font-weight:bold;">Tiền CK</div><div class="t" style="left:645.3px;top:136.41px;font-size:4.6px;line-height:5.98px;color:#333;font-weight:bold;">TTT</div><div class="t" style="left:665.8px;top:136.41px;font-size:4.6px;line-height:5.98px;color:#333;font-weight:bold;">Trọng lượng (kg)</div><div class="t" style="left:717.8px;top:136.41px;font-size:4.6px;line-height:5.98px;color:#333;font-weight:bold;">GH</div><div style="left:144.1px;top:143.3px;width:595.8px;height:8.3px;background:#DADADA"></div><div style="left:144.1px;top:143.3px;width:14.4px;height:8.3px;background:#fff"></div><div class="t" style="left:144.0px;top:146.26px;width:6px;text-align:center;font-size:4.5px;transform:scaleX(0.8);transform-origin:50% 0;line-height:4.68px;color:#333;">▸</div><div class="t" style="left:150.5px;top:145.22px;font-size:5.2px;line-height:6.76px;color:#222;font-weight:bold;">1</div><div style="left:158.8px;top:143.6px;width:29.8px;height:7.7px;background:#F8F490"></div><div style="left:159.6px;top:145.4px;width:3.6px;height:3.6px;background:#E6DE80;border:0.6px solid #B8B060;border-radius:1px"></div><div class="t" style="left:164.8px;top:144.88px;font-size:5.1px;line-height:6.63px;color:#E8401A;font-weight:bold;">20230...</div><div style="left:188.6px;top:143.6px;width:5.7px;height:7.7px;background:#F2F2F2;border:0.6px solid #CFCFCF"></div><div class="t" style="left:188.5px;top:146.13px;width:6px;text-align:center;font-size:4.5px;transform:scaleX(0.844);transform-origin:50% 0;line-height:4.94px;color:#555;">▾</div><div class="t" style="left:290.3px;top:145.05px;font-size:5.0px;line-height:6.5px;color:#555;">m2</div><div class="t" style="left:283.4px;top:145.05px;width:50px;text-align:right;font-size:5.0px;line-height:6.5px;color:#444;">3,353</div><div class="t" style="left:305.2px;top:145.05px;width:50px;text-align:right;font-size:5.0px;line-height:6.5px;color:#444;">2,438</div><div class="t" style="left:332.2px;top:145.05px;width:50px;text-align:right;font-size:5.0px;line-height:6.5px;color:#444;">1</div><div class="t" style="left:356.7px;top:145.05px;width:50px;text-align:right;font-size:5.0px;line-height:6.5px;color:#444;">8.175</div><div class="t" style="left:391.0px;top:145.05px;width:50px;text-align:right;font-size:5.0px;line-height:6.5px;color:#444;">100,000</div><div class="t" style="left:415.0px;top:145.05px;width:50px;text-align:right;font-size:5.0px;line-height:6.5px;color:#444;">3.353</div><div class="t" style="left:449.0px;top:145.05px;width:50px;text-align:right;font-size:5.0px;line-height:6.5px;color:#444;font-weight:bold;">817,461</div><div class="t" style="left:471.4px;top:145.05px;width:50px;text-align:right;font-size:5.0px;line-height:6.5px;color:#444;">10,059</div><div class="t" style="left:491.4px;top:145.05px;width:50px;text-align:right;font-size:5.0px;line-height:6.5px;color:#444;">0</div><div class="t" style="left:513.4px;top:145.05px;width:50px;text-align:right;font-size:5.0px;line-height:6.5px;color:#444;">0</div><div class="t" style="left:547.4px;top:145.05px;width:50px;text-align:right;font-size:5.0px;line-height:6.5px;color:#444;">2,043,654</div><div class="t" style="left:568.2px;top:145.05px;width:50px;text-align:right;font-size:5.0px;line-height:6.5px;color:#444;">0.00</div><div class="t" style="left:592.2px;top:145.05px;width:50px;text-align:right;font-size:5.0px;line-height:6.5px;color:#444;">0</div><div class="t" style="left:645.3px;top:145.05px;font-size:5.0px;line-height:6.5px;color:#444;">2,871...</div><div class="t" style="left:664.5px;top:145.05px;width:50px;text-align:right;font-size:5.0px;line-height:6.5px;color:#444;">0.00</div><div style="left:725.5px;top:145.2px;width:4.4px;height:4.4px;background:#fff;border:0.5px solid #BBB"></div><svg style="left:725.5px;top:144.8px" width="5" height="5"><polyline points="1,2.6 2,3.8 4.2,1" fill="none" stroke="#666" stroke-width="0.6"/></svg><div style="left:144.1px;top:151.6px;width:595.8px;height:80.0px;background:#fff"></div><div style="left:159px;top:151.6px;width:0.6px;height:80.0px;background:#D8D8D8"></div><div style="left:167.5px;top:151.8px;width:572.4px;height:79.6px;background:#F0F0F0;border-left:0.6px solid #C8C8C8;border-bottom:0.6px solid #C8C8C8"></div><div style="left:168px;top:152px;width:571.9px;height:10px;background:#fff"></div><div style="left:168px;top:161.0px;width:571.9px;height:0.6px;background:#D5D5D5"></div><div style="left:168px;top:152.3px;width:38.3px;height:9.3px;background:#F3F3F3"></div><div style="left:206.4px;top:153.0px;width:41.1px;height:8.6px;background:#F0F0F0;border:0.6px solid #DADADA;border-bottom:none"></div><div class="t" style="left:171px;top:154.94px;font-size:4.5px;transform:scaleX(0.978);transform-origin:0 0;line-height:5.72px;color:#444;">Kết cấu gia công</div><div class="t" style="left:210px;top:155.01px;font-size:4.5px;transform:scaleX(0.956);transform-origin:0 0;line-height:5.59px;color:#444;">Vị trí trên kệ hàng</div><div style="left:168px;top:161.4px;width:571.5px;height:57.2px;background:#fff;border-bottom:0.6px solid #C8C8C8"></div><div style="left:168px;top:161.4px;width:571.5px;height:8.0px;background:#F0F0F0;border-bottom:0.6px solid #CFCFCF"></div><div style="left:168px;top:169.4px;width:7.5px;height:49.2px;background:#FFFFFF"></div><div style="left:174.8px;top:161.4px;width:0.6px;height:57.2px;background:#DDDDDD"></div><div style="left:255px;top:161.4px;width:0.6px;height:57.2px;background:#DDDDDD"></div><div style="left:336px;top:161.4px;width:0.6px;height:57.2px;background:#DDDDDD"></div><div style="left:416px;top:161.4px;width:0.6px;height:57.2px;background:#DDDDDD"></div><div style="left:497.4px;top:161.4px;width:0.6px;height:57.2px;background:#DDDDDD"></div><div style="left:576.8px;top:161.4px;width:0.6px;height:57.2px;background:#DDDDDD"></div><div style="left:657.8px;top:161.4px;width:0.6px;height:57.2px;background:#DDDDDD"></div><div class="t" style="left:176.60000000000002px;top:162.09px;font-size:5.1px;line-height:6.63px;color:#333;font-weight:bold;">Tên gia công</div><div class="t" style="left:256.8px;top:162.94px;font-size:4.7px;line-height:6.11px;color:#333;font-weight:bold;">Loại</div><div class="t" style="left:337.8px;top:162.94px;font-size:4.7px;line-height:6.11px;color:#333;font-weight:bold;">Số lượng</div><div class="t" style="left:417.8px;top:162.94px;font-size:4.7px;line-height:6.11px;color:#333;font-weight:bold;">Công thức mài</div><div class="t" style="left:499.2px;top:162.94px;font-size:4.7px;line-height:6.11px;color:#333;font-weight:bold;">M</div><div class="t" style="left:578.5999999999999px;top:162.94px;font-size:4.7px;line-height:6.11px;color:#333;font-weight:bold;">Đơn giá</div><div class="t" style="left:659.5999999999999px;top:162.94px;font-size:4.7px;line-height:6.11px;color:#333;font-weight:bold;">Thành tiền</div><div class="t" style="left:170px;top:163.39px;font-size:4.5px;transform:scaleX(0.756);transform-origin:0 0;line-height:4.42px;color:#888;">✎</div><div style="left:168px;top:177.7px;width:571.5px;height:0.6px;background:#E6E6E6"></div><div style="left:168px;top:185.9px;width:571.5px;height:0.6px;background:#E6E6E6"></div><div style="left:168px;top:194.2px;width:571.5px;height:0.6px;background:#E6E6E6"></div><div style="left:168px;top:202.4px;width:571.5px;height:0.6px;background:#E6E6E6"></div><div style="left:168px;top:210.6px;width:571.5px;height:0.6px;background:#E6E6E6"></div><div class="t" style="left:176.7px;top:171.47px;font-size:4.9px;line-height:6.37px;color:#555;">Mài  thô</div><div class="t" style="left:257.3px;top:171.53px;font-size:4.8px;line-height:6.24px;color:#555;">MAI</div><div class="t" style="left:355.3px;top:171.47px;width:60px;text-align:right;font-size:4.9px;line-height:6.37px;color:#555;">0.</div><div class="t" style="left:418.3px;top:171.53px;font-size:4.8px;line-height:6.24px;color:#555;">LO</div><div class="t" style="left:516.3px;top:171.47px;width:60px;text-align:right;font-size:4.9px;line-height:6.37px;color:#555;">3.353</div><div class="t" style="left:597.2px;top:171.47px;width:60px;text-align:right;font-size:4.9px;line-height:6.37px;color:#555;">3,000</div><div class="t" style="left:678.3px;top:171.47px;width:60px;text-align:right;font-size:4.9px;line-height:6.37px;color:#555;">10,059</div><div class="t" style="left:176.7px;top:179.72px;font-size:4.9px;line-height:6.37px;color:#555;">Khoét góc đại > 600x600</div><div class="t" style="left:257.3px;top:179.78px;font-size:4.8px;line-height:6.24px;color:#555;">LO</div><div class="t" style="left:355.3px;top:179.72px;width:60px;text-align:right;font-size:4.9px;line-height:6.37px;color:#555;">0.</div><div class="t" style="left:516.3px;top:179.72px;width:60px;text-align:right;font-size:4.9px;line-height:6.37px;color:#555;">0</div><div class="t" style="left:597.2px;top:179.72px;width:60px;text-align:right;font-size:4.9px;line-height:6.37px;color:#555;">40,000</div><div class="t" style="left:678.3px;top:179.72px;width:60px;text-align:right;font-size:4.9px;line-height:6.37px;color:#555;">0</div><div class="t" style="left:176.7px;top:187.97px;font-size:4.9px;line-height:6.37px;color:#555;">Khoan lỗ < pi 25</div><div class="t" style="left:257.3px;top:188.03px;font-size:4.8px;line-height:6.24px;color:#555;">LO</div><div class="t" style="left:355.3px;top:187.97px;width:60px;text-align:right;font-size:4.9px;line-height:6.37px;color:#555;">0.</div><div class="t" style="left:516.3px;top:187.97px;width:60px;text-align:right;font-size:4.9px;line-height:6.37px;color:#555;">0</div><div class="t" style="left:597.2px;top:187.97px;width:60px;text-align:right;font-size:4.9px;line-height:6.37px;color:#555;">5,000</div><div class="t" style="left:678.3px;top:187.97px;width:60px;text-align:right;font-size:4.9px;line-height:6.37px;color:#555;">0</div><div class="t" style="left:176.7px;top:196.22px;font-size:4.9px;line-height:6.37px;color:#555;">Bo góc > 10mm</div><div class="t" style="left:257.3px;top:196.28px;font-size:4.8px;line-height:6.24px;color:#555;">GOC</div><div class="t" style="left:355.3px;top:196.22px;width:60px;text-align:right;font-size:4.9px;line-height:6.37px;color:#555;">0.</div><div class="t" style="left:516.3px;top:196.22px;width:60px;text-align:right;font-size:4.9px;line-height:6.37px;color:#555;">0</div><div class="t" style="left:597.2px;top:196.22px;width:60px;text-align:right;font-size:4.9px;line-height:6.37px;color:#555;">8,000</div><div class="t" style="left:678.3px;top:196.22px;width:60px;text-align:right;font-size:4.9px;line-height:6.37px;color:#555;">0</div><div class="t" style="left:176.7px;top:204.41px;font-size:4.9px;line-height:6.37px;color:#555;">Sơn màu thường</div><div class="t" style="left:257.3px;top:204.48px;font-size:4.8px;line-height:6.24px;color:#555;">SON</div><div class="t" style="left:355.3px;top:204.41px;width:60px;text-align:right;font-size:4.9px;line-height:6.37px;color:#555;">8.174614</div><div class="t" style="left:516.3px;top:204.41px;width:60px;text-align:right;font-size:4.9px;line-height:6.37px;color:#555;">0</div><div class="t" style="left:597.2px;top:204.41px;width:60px;text-align:right;font-size:4.9px;line-height:6.37px;color:#555;">250,000</div><div class="t" style="left:678.3px;top:204.41px;width:60px;text-align:right;font-size:4.9px;line-height:6.37px;color:#555;">2,043,654</div><div class="t" style="left:168.5px;top:171.79px;width:6px;text-align:center;font-size:4.5px;transform:scaleX(0.756);transform-origin:50% 0;line-height:4.42px;color:#555;">▸</div><div class="t" style="left:168.5px;top:212.14px;width:6px;text-align:center;font-size:4.5px;transform:scaleX(0.978);transform-origin:50% 0;line-height:5.72px;color:#555;">*</div><div style="left:249.2px;top:170.0px;width:5.8px;height:7.2px;background:#F3F3F3;border:0.6px solid #C8C8C8"></div><div class="t" style="left:249.1px;top:172.16px;width:6px;text-align:center;font-size:4.5px;transform:scaleX(0.8);transform-origin:50% 0;line-height:4.68px;color:#555;">▾</div><div style="left:498px;top:220.5px;width:78.8px;height:9.5px;background:#fff;border:0.6px solid #D5D5D5"></div><div class="t" style="left:515.5px;top:222.52px;width:60px;text-align:right;font-size:5.2px;line-height:6.76px;color:#C82020;font-weight:bold;">3.353</div><div style="left:659.5px;top:220.5px;width:79.0px;height:9.5px;background:#fff;border:0.6px solid #D5D5D5"></div><div class="t" style="left:677.5px;top:222.52px;width:60px;text-align:right;font-size:5.2px;line-height:6.76px;color:#C82020;font-weight:bold;">2,053,713</div><div style="left:144.1px;top:231.6px;width:595.8px;height:8.6px;background:#fff;border-bottom:0.7px solid #E0E0E0"></div><div class="t" style="left:145.6px;top:233.94px;font-size:4.5px;transform:scaleX(0.978);transform-origin:0 0;line-height:5.72px;color:#444;">*</div><div class="t" style="left:149.5px;top:233.35px;font-size:5.0px;line-height:6.5px;color:#222;font-weight:bold;">-2</div><div style="left:159px;top:231.8px;width:35.3px;height:7.5px;background:#F4F4F4"></div><div class="t" style="left:160.3px;top:233.12px;font-size:4.9px;line-height:6.37px;color:#555;">(Nhập mã hà...</div><div style="left:194.0px;top:231.6px;width:0.6px;height:8.4px;background:#E3E3E3"></div><div style="left:288.2px;top:231.6px;width:0.6px;height:8.4px;background:#E3E3E3"></div><div style="left:310.0px;top:231.6px;width:0.6px;height:8.4px;background:#E3E3E3"></div><div style="left:334.2px;top:231.6px;width:0.6px;height:8.4px;background:#E3E3E3"></div><div style="left:356.0px;top:231.6px;width:0.6px;height:8.4px;background:#E3E3E3"></div><div style="left:383.5px;top:231.6px;width:0.6px;height:8.4px;background:#E3E3E3"></div><div style="left:407.5px;top:231.6px;width:0.6px;height:8.4px;background:#E3E3E3"></div><div style="left:441.8px;top:231.6px;width:0.6px;height:8.4px;background:#E3E3E3"></div><div style="left:465.8px;top:231.6px;width:0.6px;height:8.4px;background:#E3E3E3"></div><div style="left:499.8px;top:231.6px;width:0.6px;height:8.4px;background:#E3E3E3"></div><div style="left:522.2px;top:231.6px;width:0.6px;height:8.4px;background:#E3E3E3"></div><div style="left:542.2px;top:231.6px;width:0.6px;height:8.4px;background:#E3E3E3"></div><div style="left:564.2px;top:231.6px;width:0.6px;height:8.4px;background:#E3E3E3"></div><div style="left:598.2px;top:231.6px;width:0.6px;height:8.4px;background:#E3E3E3"></div><div style="left:619.1px;top:231.6px;width:0.6px;height:8.4px;background:#E3E3E3"></div><div style="left:643.0px;top:231.6px;width:0.6px;height:8.4px;background:#E3E3E3"></div><div style="left:663.5px;top:231.6px;width:0.6px;height:8.4px;background:#E3E3E3"></div><div style="left:715.5px;top:231.6px;width:0.6px;height:8.4px;background:#E3E3E3"></div><div style="left:466.3px;top:231.8px;width:33.5px;height:7.8px;background:#EAF6FB"></div><div style="left:725.8px;top:233.5px;width:3.4px;height:3.4px;background:#555;border:0.7px solid #fff;outline:0.5px solid #999"></div><div style="left:144.1px;top:328px;width:595.8px;height:12.6px;background:#F0F0F0;border-top:0.6px solid #D5D5D5"></div><div style="left:384.7px;top:330.3px;width:22.6px;height:9.7px;background:#fff;border:0.6px solid #DDDDDD"></div><div class="t" style="left:346.0px;top:332.62px;width:60px;text-align:right;font-size:4.9px;line-height:6.37px;color:#C82020;font-weight:bold;">8.175</div><div style="left:468px;top:330.3px;width:31px;height:9.7px;background:#fff;border:0.6px solid #DDDDDD"></div><div class="t" style="left:437.7px;top:332.62px;width:60px;text-align:right;font-size:4.9px;line-height:6.37px;color:#C82020;font-weight:bold;">817,461</div><div style="left:501px;top:330.3px;width:21px;height:9.7px;background:#fff;border:0.6px solid #DDDDDD"></div><div class="t" style="left:460.7px;top:332.62px;width:60px;text-align:right;font-size:4.9px;line-height:6.37px;color:#C82020;font-weight:bold;">10,059</div><div style="left:524px;top:330.3px;width:17.5px;height:9.7px;background:#fff;border:0.6px solid #DDDDDD"></div><div class="t" style="left:480.2px;top:332.62px;width:60px;text-align:right;font-size:4.9px;line-height:6.37px;color:#C82020;font-weight:bold;">0</div><div style="left:543px;top:330.3px;width:20.5px;height:9.7px;background:#fff;border:0.6px solid #DDDDDD"></div><div class="t" style="left:502.2px;top:332.62px;width:60px;text-align:right;font-size:4.9px;line-height:6.37px;color:#C82020;font-weight:bold;">0</div><div style="left:566px;top:330.3px;width:32px;height:9.7px;background:#fff;border:0.6px solid #DDDDDD"></div><div class="t" style="left:536.7px;top:332.62px;width:60px;text-align:right;font-size:4.9px;line-height:6.37px;color:#C82020;font-weight:bold;">2,043,654</div><div style="left:620.5px;top:330.3px;width:21.5px;height:9.7px;background:#fff;border:0.6px solid #DDDDDD"></div><div class="t" style="left:580.7px;top:332.62px;width:60px;text-align:right;font-size:4.9px;line-height:6.37px;color:#C82020;font-weight:bold;">0</div><div style="left:644px;top:330.3px;width:18.5px;height:9.7px;background:#fff;border:0.6px solid #DDDDDD"></div><div class="t" style="left:645.3px;top:332.62px;font-size:4.9px;line-height:6.37px;color:#C82020;font-weight:bold;">2,87...</div><div style="left:665px;top:330.3px;width:50px;height:9.7px;background:#fff;border:0.6px solid #DDDDDD"></div><div class="t" style="left:653.7px;top:332.62px;width:60px;text-align:right;font-size:4.9px;line-height:6.37px;color:#C82020;font-weight:bold;">0.00</div><div style="left:740.5px;top:133.5px;width:2.7px;height:253.7px;background:#EBEBEB"></div><div class="t" style="left:143px;top:345.57px;font-size:4.5px;transform:scaleX(0.933);transform-origin:0 0;line-height:5.46px;color:#555;">Giảm:</div><div class="t" style="left:157.8px;top:344.68px;font-size:4.8px;line-height:6.24px;color:#444;">%</div><div style="left:164.5px;top:343.5px;width:19.0px;height:7.8px;background:#fff;border:0.6px solid #D3D3D3"></div><div class="t" style="left:166px;top:345.28px;font-size:4.8px;line-height:6.24px;color:#555;">0.00</div><div class="t" style="left:185px;top:345.38px;font-size:4.8px;line-height:6.24px;color:#777;">Tiền</div><div style="left:197px;top:343.5px;width:40.5px;height:7.8px;background:#fff;border:0.6px solid #D3D3D3"></div><div class="t" style="left:206px;top:345.28px;width:30px;text-align:right;font-size:4.8px;line-height:6.24px;color:#555;">0</div><div class="t" style="left:238.5px;top:345.38px;font-size:4.8px;line-height:6.24px;color:#777;">Ghi chú khách</div><div style="left:270.5px;top:343.5px;width:470.0px;height:7.8px;background:#fff;border:0.6px solid #D3D3D3"></div><div class="t" style="left:143px;top:354.26px;font-size:5.75px;line-height:7.48px;color:#555;">Tổng cộng</div><div style="left:170.5px;top:352.5px;width:67.0px;height:8.0px;background:#EBEBEB;border:0.6px solid #D3D3D3"></div><div class="t" style="left:176.3px;top:354.25px;width:60px;text-align:right;font-size:5.0px;line-height:6.5px;color:#222;font-weight:bold;">2,871,174</div><div style="left:239px;top:352.8px;width:501.5px;height:8.0px;background:#EBEBEB;border:0.6px solid #D3D3D3"></div><div class="t" style="left:240.5px;top:354.28px;font-size:4.95px;line-height:6.44px;color:#555;">Hai triệu tám trăm bảy mươi mốt nghìn một trăm bảy mươi bốn đồng</div><div class="t" style="left:143px;top:364.55px;font-size:5.0px;line-height:6.5px;color:#666;">Thanh toán</div><div style="left:170.5px;top:363px;width:67.0px;height:8.5px;background:#fff;border:0.6px solid #D3D3D3"></div><div class="t" style="left:206.3px;top:364.95px;width:30px;text-align:right;font-size:5.0px;line-height:6.5px;color:#222;font-weight:bold;">00</div><div class="t" style="left:238.5px;top:365.12px;font-size:5.2px;line-height:6.76px;color:#666;">Vào quỹ</div><div style="left:260px;top:362.5px;width:221.8px;height:9.0px;background:#fff;border:0.6px solid #D3D3D3"></div><div style="left:476.6px;top:362.9px;width:4.8px;height:8.2px;background:#F5F5F5;border:0.6px solid #D8D8D8"></div><div class="t" style="left:476.0px;top:365.73px;width:6px;text-align:center;font-size:4.5px;transform:scaleX(0.844);transform-origin:50% 0;line-height:4.94px;color:#555;">▾</div><div class="t" style="left:262px;top:364.66px;font-size:5.3px;line-height:6.89px;color:#333;font-weight:bold;">Tiền mặt</div><div class="t" style="left:483px;top:364.7px;font-size:6.0px;line-height:7.8px;color:#555;">Tổng nợ</div><div style="left:503.5px;top:363.5px;width:237.0px;height:8.0px;background:#fff;border:0.6px solid #D3D3D3"></div><div class="t" style="left:679.3px;top:365.25px;width:60px;text-align:right;font-size:5.0px;line-height:6.5px;color:#222;font-weight:bold;">2,511,974</div><div style="left:142.5px;top:373.8px;width:598.0px;height:0.6px;background:#DDDDDD"></div><div style="left:143.3px;top:376px;width:21.5px;height:9.8px;background:#EEF2F6;border:0.6px solid #D3D3D3"></div><svg style="left:144.8px;top:377.6px" width="8" height="7"><rect x="0.4" y="0.4" width="6.4" height="6" fill="#7F9CB8"/><rect x="1.6" y="0.6" width="3.8" height="2" fill="#E6EEF8"/><rect x="1.6" y="4" width="1.4" height="2.2" fill="#DDE6F0"/><rect x="4" y="4" width="1.4" height="2.2" fill="#DDE6F0"/></svg><div class="t" style="left:153px;top:379.25px;font-size:4.7px;line-height:6.11px;color:#D42B2B;font-weight:bold;">Lưu</div><div style="left:167px;top:376px;width:29.3px;height:9.8px;background:#EEEEEE;border:0.6px solid #D3D3D3"></div><svg style="left:169px;top:376.5px" width="7" height="8"><rect x="0.8" y="1.5" width="5" height="6" fill="#C9C9C9"/><rect x="1.8" y="0.5" width="3" height="1.6" fill="#B5B5B5"/></svg><div class="t" style="left:180.7px;top:379.18px;font-size:4.8px;line-height:6.24px;color:#D42B2B;font-weight:bold;">Sửa</div><div style="left:199.3px;top:378.4px;width:5.4px;height:5.6px;background:#fff;border:0.6px solid #A8A8A8"></div><div class="t" style="left:206.2px;top:378.75px;font-size:5.15px;line-height:6.7px;color:#2B3FB8;font-weight:bold;">Lưu -> In</div><div style="left:234px;top:376px;width:35.6px;height:9.8px;background:#EEEEEE;border:0.6px solid #D3D3D3"></div><div style="left:270.2px;top:376px;width:4.8px;height:9.8px;background:#EEEEEE;border:0.6px solid #D3D3D3"></div><svg style="left:236.5px;top:377px" width="10" height="8"><rect x="0.6" y="3" width="7.6" height="3.6" rx="0.6" fill="#4A6A96"/><rect x="2.2" y="0.6" width="4.4" height="3" fill="#F2F5FA" stroke="#7C8FAA" stroke-width="0.4"/><rect x="2.2" y="5.4" width="4.4" height="2.2" fill="#E8EEF6"/><circle cx="7.8" cy="2.4" r="1.3" fill="#2F4F7F"/><path d="M6.4,7.6 C6.4,5.4 9.4,5.4 9.4,7.6 Z" fill="#2F4F7F"/></svg><div class="t" style="left:246.0px;top:378.92px;width:20px;text-align:center;font-size:4.9px;line-height:6.37px;color:#D42B2B;font-weight:bold;">In 1</div><div class="t" style="left:269.6px;top:379.93px;width:6px;text-align:center;font-size:4.5px;transform:scaleX(0.844);transform-origin:50% 0;line-height:4.94px;color:#555;">▾</div><div style="left:277px;top:376px;width:32.6px;height:9.8px;background:#EEEEEE;border:0.6px solid #D3D3D3"></div><div style="left:310.2px;top:376px;width:4.6px;height:9.8px;background:#EEEEEE;border:0.6px solid #D3D3D3"></div><svg style="left:279.5px;top:377px" width="10" height="8"><rect x="0.6" y="3" width="7.6" height="3.6" rx="0.6" fill="#4A6A96"/><rect x="2.2" y="0.6" width="4.4" height="3" fill="#F2F5FA" stroke="#7C8FAA" stroke-width="0.4"/><rect x="2.2" y="5.4" width="4.4" height="2.2" fill="#E8EEF6"/><circle cx="7.8" cy="2.4" r="1.3" fill="#2F4F7F"/><path d="M6.4,7.6 C6.4,5.4 9.4,5.4 9.4,7.6 Z" fill="#2F4F7F"/></svg><div class="t" style="left:290.3px;top:378.92px;font-size:4.9px;line-height:6.37px;color:#D42B2B;font-weight:bold;">In KCN</div><div class="t" style="left:309.5px;top:379.93px;width:6px;text-align:center;font-size:4.5px;transform:scaleX(0.844);transform-origin:50% 0;line-height:4.94px;color:#555;">▾</div><div style="left:317px;top:376px;width:45.8px;height:9.8px;background:#EEEEEE;border:0.6px solid #D3D3D3"></div><div style="left:363.4px;top:376px;width:4.6px;height:9.8px;background:#EEEEEE;border:0.6px solid #D3D3D3"></div><svg style="left:319.5px;top:377px" width="10" height="8"><rect x="0.6" y="3" width="7.6" height="3.6" rx="0.6" fill="#4A6A96"/><rect x="2.2" y="0.6" width="4.4" height="3" fill="#F2F5FA" stroke="#7C8FAA" stroke-width="0.4"/><rect x="2.2" y="5.4" width="4.4" height="2.2" fill="#E8EEF6"/><circle cx="7.8" cy="2.4" r="1.3" fill="#2F4F7F"/><path d="M6.4,7.6 C6.4,5.4 9.4,5.4 9.4,7.6 Z" fill="#2F4F7F"/></svg><div class="t" style="left:328.5px;top:378.79px;font-size:5.1px;line-height:6.63px;color:#D42B2B;font-weight:bold;">In xuất kho</div><div class="t" style="left:362.7px;top:379.93px;width:6px;text-align:center;font-size:4.5px;transform:scaleX(0.844);transform-origin:50% 0;line-height:4.94px;color:#555;">▾</div><div style="left:466px;top:375px;width:24.5px;height:9.8px;background:#EEEEEE;border:0.6px solid #D3D3D3"></div><svg style="left:467.5px;top:376.5px" width="7" height="7"><path d="M0.5,1.5 L3,1.5 L3.8,2.5 L6.5,2.5 L6.5,6 L0.5,6 Z" fill="#F0CB5A"/><path d="M3.5,4.2 L6.8,4.2 M5.4,2.8 L6.8,4.2 L5.4,5.6" stroke="#3DA63D" stroke-width="0.8" fill="none"/></svg><div class="t" style="left:476px;top:377.88px;font-size:4.8px;line-height:6.24px;color:#444;">Thoát</div><div style="left:493.8px;top:377.4px;width:5.4px;height:6.0px;background:#fff;border:0.6px solid #B0B0B0"></div><svg style="left:493.8px;top:377.4px" width="6" height="6"><polyline points="1.2,3 2.4,4.4 4.6,1.4" fill="none" stroke="#777" stroke-width="0.6"/></svg><div class="t" style="left:500px;top:378.05px;font-size:5.0px;line-height:6.5px;color:#1F2FA0;font-weight:bold;">Xem In</div>
</body></html>
